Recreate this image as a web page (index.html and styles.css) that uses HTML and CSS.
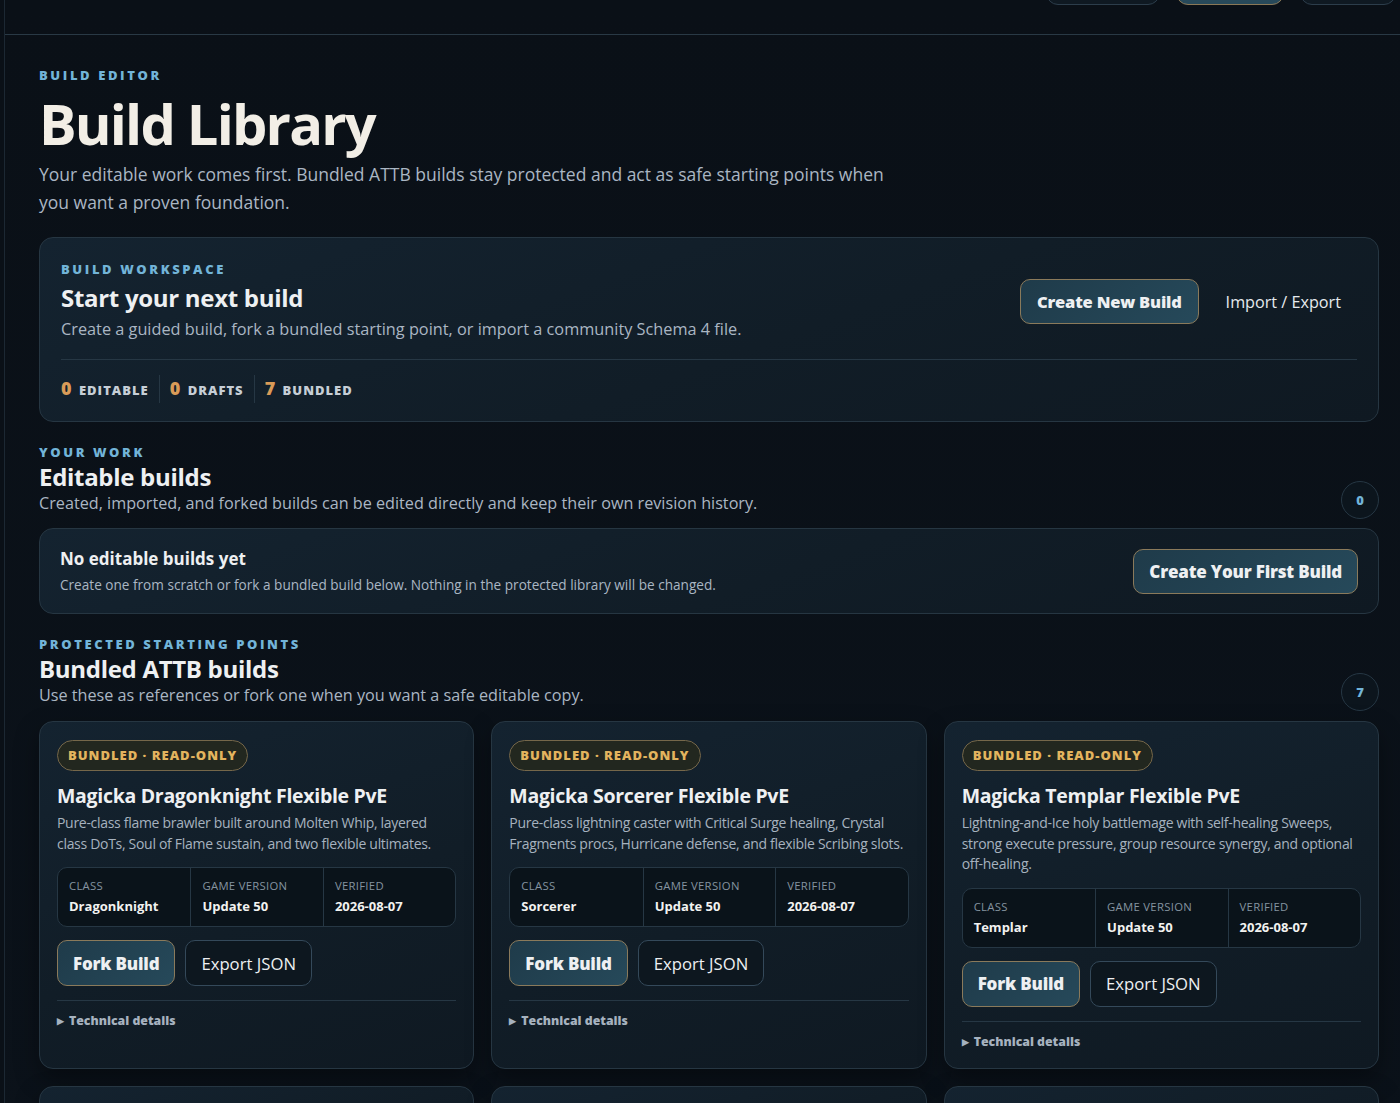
FILE: index.html
```html
<!DOCTYPE html>
<html>
<head>
    <title>Build Library</title>
    <link rel="stylesheet" href="styles.css">
</head>
<body>
    <div class="shell">
        <header class="topbar">
            <button class="top-btn" aria-label="Builds"></button>
            <button class="top-btn top-btn-active" aria-label="Library"></button>
            <button class="top-btn" aria-label="Settings"></button>
        </header>

        <main class="page">
            <section class="intro">
                <div class="eyebrow">Build Editor</div>
                <h1>Build Library</h1>
                <p class="lead">Your editable work comes first. Bundled ATTB builds stay protected and act as safe starting points when you want a proven foundation.</p>
            </section>

            <section class="panel workspace">
                <div class="workspace-top">
                    <div>
                        <div class="eyebrow">Build Workspace</div>
                        <h2 class="workspace-title">Start your next build</h2>
                        <p class="muted">Create a guided build, fork a bundled starting point, or import a community Schema 4 file.</p>
                    </div>
                    <div class="workspace-actions">
                        <button class="btn btn-primary">Create New Build</button>
                        <button class="btn-link">Import / Export</button>
                    </div>
                </div>
                <div class="stats">
                    <div class="stat"><span class="stat-num">0</span> Editable</div>
                    <div class="stat"><span class="stat-num">0</span> Drafts</div>
                    <div class="stat"><span class="stat-num">7</span> Bundled</div>
                </div>
            </section>

            <section class="section">
                <div class="section-head">
                    <div>
                        <div class="eyebrow">Your Work</div>
                        <h2>Editable builds</h2>
                        <p class="muted">Created, imported, and forked builds can be edited directly and keep their own revision history.</p>
                    </div>
                    <span class="count">0</span>
                </div>
                <div class="panel empty">
                    <div>
                        <h3>No editable builds yet</h3>
                        <p>Create one from scratch or fork a bundled build below. Nothing in the protected library will be changed.</p>
                    </div>
                    <button class="btn btn-primary">Create Your First Build</button>
                </div>
            </section>

            <section class="section">
                <div class="section-head">
                    <div>
                        <div class="eyebrow">Protected Starting Points</div>
                        <h2>Bundled ATTB builds</h2>
                        <p class="muted">Use these as references or fork one when you want a safe editable copy.</p>
                    </div>
                    <span class="count">7</span>
                </div>

                <div class="build-grid">
                    <article class="panel build-card">
                        <span class="badge">Bundled · Read-only</span>
                        <h3>Magicka Dragonknight Flexible PvE</h3>
                        <p class="build-desc">Pure-class flame brawler built around Molten Whip, layered class DoTs, Soul of Flame sustain, and two flexible ultimates.</p>
                        <div class="meta">
                            <div><span>Class</span><strong>Dragonknight</strong></div>
                            <div><span>Game Version</span><strong>Update 50</strong></div>
                            <div><span>Verified</span><strong>2026-08-07</strong></div>
                        </div>
                        <div class="card-actions">
                            <button class="btn btn-primary">Fork Build</button>
                            <button class="btn">Export JSON</button>
                        </div>
                        <div class="details">Technical details</div>
                    </article>

                    <article class="panel build-card">
                        <span class="badge">Bundled · Read-only</span>
                        <h3>Magicka Sorcerer Flexible PvE</h3>
                        <p class="build-desc">Pure-class lightning caster with Critical Surge healing, Crystal Fragments procs, Hurricane defense, and flexible Scribing slots.</p>
                        <div class="meta">
                            <div><span>Class</span><strong>Sorcerer</strong></div>
                            <div><span>Game Version</span><strong>Update 50</strong></div>
                            <div><span>Verified</span><strong>2026-08-07</strong></div>
                        </div>
                        <div class="card-actions">
                            <button class="btn btn-primary">Fork Build</button>
                            <button class="btn">Export JSON</button>
                        </div>
                        <div class="details">Technical details</div>
                    </article>

                    <article class="panel build-card">
                        <span class="badge">Bundled · Read-only</span>
                        <h3>Magicka Templar Flexible PvE</h3>
                        <p class="build-desc">Lightning-and-Ice holy battlemage with self-healing Sweeps, strong execute pressure, group resource synergy, and optional off-healing.</p>
                        <div class="meta">
                            <div><span>Class</span><strong>Templar</strong></div>
                            <div><span>Game Version</span><strong>Update 50</strong></div>
                            <div><span>Verified</span><strong>2026-08-07</strong></div>
                        </div>
                        <div class="card-actions">
                            <button class="btn btn-primary">Fork Build</button>
                            <button class="btn">Export JSON</button>
                        </div>
                        <div class="details">Technical details</div>
                    </article>

                    <article class="panel build-card">
                        <span class="badge">Bundled · Read-only</span>
                        <h3>Stamina Nightblade Flexible PvE</h3>
                    </article>
                    <article class="panel build-card">
                        <span class="badge">Bundled · Read-only</span>
                        <h3>Stamina Warden Flexible PvE</h3>
                    </article>
                    <article class="panel build-card">
                        <span class="badge">Bundled · Read-only</span>
                        <h3>Magicka Arcanist Flexible PvE</h3>
                    </article>
                </div>
            </section>
        </main>
    </div>
</body>
</html>
```

FILE: styles.css
```css
* {
    box-sizing: border-box;
}

html, body {
    margin: 0;
    height: 100%;
    overflow: hidden;
}

body {
    font-family: "Open Sans", "Noto Sans", sans-serif;
    background: #0a1017;
    color: #eef0f2;
}

.shell {
    margin-left: 4px;
    border-left: 1px solid #1c2833;
    min-height: 100%;
    background: linear-gradient(180deg, #0a1017 0%, #0b121a 100%);
}

/* top navigation, scrolled mostly out of view */
.topbar {
    height: 35px;
    border-bottom: 1px solid #293945;
    display: flex;
    justify-content: flex-end;
    align-items: flex-end;
    gap: 16px;
    padding: 0 4px 29px 0;
    overflow: hidden;
}

.top-btn {
    width: 114px;
    height: 40px;
    border-radius: 12px;
    border: 1px solid #2c3d4b;
    background: #0f1922;
}

.top-btn-active {
    width: 108px;
    border-color: #8a7857;
    background: #27495a;
}

.top-btn:last-child {
    width: 96px;
}

.page {
    padding: 31px 21px 0 34px;
}

.eyebrow {
    font-size: 13px;
    font-weight: 800;
    letter-spacing: 2.6px;
    text-transform: uppercase;
    color: #72b4d8;
    line-height: 18px;
}

h1 {
    margin: 4px 0 0;
    font-size: 56px;
    line-height: 70px;
    font-weight: 700;
    letter-spacing: -1.8px;
    color: #f2eee6;
}

.lead {
    margin: 2px 0 0;
    max-width: 870px;
    font-size: 17.5px;
    line-height: 28px;
    color: #aab6c3;
}

.panel {
    border: 1px solid #263642;
    border-radius: 14px;
    background: linear-gradient(160deg, #142330 0%, #111d27 55%, #0f1922 100%);
}

.workspace {
    margin-top: 21px;
    padding: 22px 21px 18px;
}

.workspace-top {
    display: flex;
    justify-content: space-between;
    align-items: center;
    padding-bottom: 18px;
    border-bottom: 1px solid #263744;
}

.workspace-title {
    margin: 4px 0 0;
    font-size: 24px;
    line-height: 32px;
    font-weight: 700;
    letter-spacing: -0.3px;
}

.muted {
    margin: 3px 0 0;
    font-size: 16.3px;
    line-height: 24px;
    color: #aab6c3;
}

.workspace-actions {
    display: flex;
    align-items: center;
    gap: 27px;
    margin-right: 16px;
    margin-top: 2px;
}

.btn {
    font-family: inherit;
    font-size: 16.7px;
    color: #eef0f2;
    background: #0d171f;
    border: 1px solid #34495a;
    border-radius: 10px;
    padding: 0 15px;
    height: 46px;
    cursor: pointer;
}

.btn-primary {
    font-size: 17px;
    font-weight: 800;
    background: linear-gradient(135deg, #1f3b4a 0%, #26495a 100%);
    border-color: #8a7a5b;
    letter-spacing: -0.2px;
}

.workspace .btn-primary {
    height: 45px;
    font-size: 16.5px;
    padding: 0 16px;
}

.btn-link {
    background: none;
    border: none;
    font-family: inherit;
    font-size: 16.2px;
    color: #e6eaee;
    padding: 0;
    cursor: pointer;
}

.stats {
    display: flex;
    align-items: center;
    padding-top: 15px;
}

.stat {
    font-size: 13px;
    font-weight: 800;
    letter-spacing: 1px;
    text-transform: uppercase;
    color: #c6ced6;
    padding: 2px 10px;
    border-left: 1px solid #263744;
    line-height: 22px;
}

.stat:first-child {
    padding-left: 0;
    border-left: none;
}

.stat-num {
    font-size: 18px;
    color: #d99b58;
    letter-spacing: 0;
    margin-right: 3px;
}

.section {
    margin-top: 21px;
}

.section-head {
    display: flex;
    justify-content: space-between;
    align-items: flex-end;
}

.section-head h2 {
    margin: 1px 0 0;
    font-size: 24px;
    line-height: 30px;
    font-weight: 700;
    letter-spacing: -0.3px;
}

.section-head .muted {
    margin: 0;
    font-size: 16.2px;
    line-height: 23px;
}

.count {
    width: 38px;
    height: 38px;
    border-radius: 50%;
    border: 1px solid #263744;
    background: #0c151d;
    display: flex;
    align-items: center;
    justify-content: center;
    font-size: 13px;
    font-weight: 800;
    color: #72b4d8;
    margin-bottom: -4px;
}

.empty {
    margin-top: 13px;
    display: flex;
    justify-content: space-between;
    align-items: center;
    padding: 18px 20px 18px;
}

.empty h3 {
    margin: 0;
    font-size: 17px;
    line-height: 24px;
    font-weight: 700;
}

.empty p {
    margin: 4px 0 0;
    font-size: 13.6px;
    line-height: 20px;
    color: #aab6c3;
}

.empty .btn-primary {
    height: 45px;
    padding: 0 15px;
}

.build-grid {
    margin-top: 14px;
    display: grid;
    grid-template-columns: repeat(3, 1fr);
    gap: 17px;
}

.build-card {
    padding: 18px 17px 16px;
    min-height: 120px;
    box-shadow: 0 10px 24px rgba(0, 0, 0, 0.35);
}

.badge {
    display: inline-block;
    height: 31px;
    line-height: 29px;
    padding: 0 10px;
    border-radius: 16px;
    border: 1px solid #75674a;
    background: #22271f;
    color: #e3b45e;
    font-size: 13px;
    font-weight: 800;
    letter-spacing: 1px;
    text-transform: uppercase;
}

.build-card h3 {
    margin: 11px 0 0;
    font-size: 19.5px;
    line-height: 28px;
    font-weight: 700;
    letter-spacing: -0.3px;
}

.build-desc {
    margin: 3px 0 0;
    font-size: 14px;
    line-height: 20.5px;
    letter-spacing: -0.3px;
    color: #a6b2bf;
}

.meta {
    margin-top: 13px;
    display: grid;
    grid-template-columns: repeat(3, 1fr);
    border: 1px solid #263744;
    border-radius: 10px;
    background: #0a131a;
    overflow: hidden;
}

.meta div {
    padding: 10px 11px 11px;
    border-left: 1px solid #263744;
}

.meta div:first-child {
    border-left: none;
}

.meta span {
    display: block;
    font-size: 11.3px;
    line-height: 16px;
    letter-spacing: 0.3px;
    text-transform: uppercase;
    color: #8593a0;
}

.meta strong {
    display: block;
    margin-top: 3px;
    font-size: 13px;
    line-height: 18px;
    color: #f2f2f0;
}

.card-actions {
    margin-top: 13px;
    display: flex;
    gap: 10px;
    padding-bottom: 14px;
    border-bottom: 1px solid #263744;
}

.details {
    margin-top: 10px;
    font-size: 12.3px;
    font-weight: 800;
    color: #a6b2bf;
    line-height: 20px;
}

.details::before {
    content: "\25B6";
    font-size: 9px;
    margin-right: 5px;
    vertical-align: 1px;
}
```
